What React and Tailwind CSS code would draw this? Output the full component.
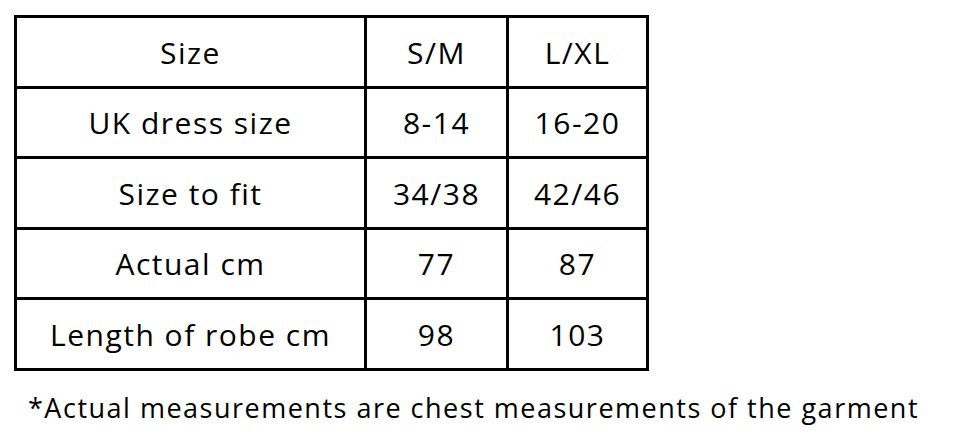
export default function App() {
  const rows = [
    ["Size", "S/M", "L/XL"],
    ["UK dress size", "8-14", "16-20"],
    ["Size to fit", "34/38", "42/46"],
    ["Actual cm", "77", "87"],
    ["Length of robe cm", "98", "103"],
  ];
  const heights = ["h-[68px]", "h-[67px]", "h-[68px]", "h-[67px]", "h-[68px]"];
  return (
    <div className="w-[960px] h-[443px] bg-white text-black" style={{ fontFamily: '"Open Sans", sans-serif' }}>
      <div className="pl-[14px] pt-[15px]">
        <div className="grid grid-cols-[347px_139px_137px] gap-[3px] p-[3px] bg-black w-fit">
          {rows.map((r, i) =>
            r.map((c, j) => (
              <div key={i + "-" + j} className={`${heights[i]} bg-white flex items-center justify-center text-[30px] tracking-[1.5px]`}>
                {c}
              </div>
            ))
          )}
        </div>
      </div>
      <div className="pl-[28px] pt-[23px] text-[27px] leading-none tracking-[1.5px]">
        *Actual measurements are chest measurements of the garment
      </div>
    </div>
  );
}
